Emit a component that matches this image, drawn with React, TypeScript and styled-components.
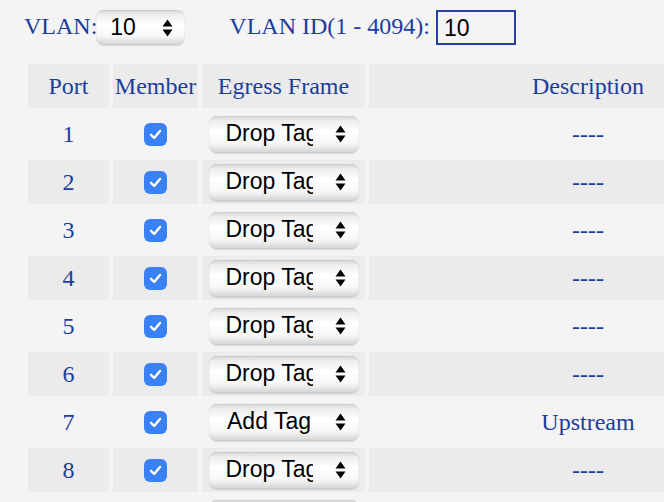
import React from "react";
import styled, { createGlobalStyle } from "styled-components";

const Global = createGlobalStyle`
  html, body {
    margin: 0;
    padding: 0;
    background: #f4f4f4;
    overflow: hidden;
  }
  body {
    font-family: "Liberation Serif", "Times New Roman", serif;
    color: #1c3d9d;
  }
`;

const Page = styled.div`
  padding: 10px 0 0 24px;
  width: 900px;
`;

const Toolbar = styled.div`
  display: flex;
  align-items: center;
  height: 35px;
  font-size: 24px;
`;

const Label = styled.span<{ $gap?: number }>`
  margin-left: ${(p) => p.$gap ?? 0}px;
  margin-right: -1px;
  line-height: 1;
  padding-bottom: 3px;
`;

const SelectBox = styled.div<{ $w: number; $h: number; $pl: number }>`
  position: relative;
  box-sizing: border-box;
  display: flex;
  align-items: center;
  width: ${(p) => p.$w}px;
  height: ${(p) => p.$h}px;
  padding-left: ${(p) => p.$pl}px;
  border-radius: 8px;
  background: linear-gradient(
    180deg,
    #d3d3d3 0%,
    #eeeeee 13%,
    #ffffff 42%,
    #f7f7f7 75%,
    #d2d2d2 100%
  );
  box-shadow: inset 0 0 0 0.5px rgba(0, 0, 0, 0.07), 0 0.5px 1px rgba(0, 0, 0, 0.12);
  font-family: "Liberation Sans", Arial, sans-serif;
  font-size: 23px;
  color: #000;
`;

const SelectValue = styled.span<{ $w: number }>`
  display: block;
  width: ${(p) => p.$w}px;
  overflow: hidden;
  white-space: nowrap;
  line-height: 1;
  padding-bottom: 1px;
`;

const Arrows = styled.svg`
  position: absolute;
  top: 50%;
  margin-top: -9px;
  pointer-events: none;
`;

const IdInput = styled.input`
  box-sizing: border-box;
  width: 80px;
  height: 35px;
  margin-left: 7px;
  border: 2px solid #2a3fa3;
  background: #f4f4f4;
  padding: 2px 0 0 6px;
  font-family: "Liberation Sans", Arial, sans-serif;
  font-size: 23px;
  color: #000;
  outline: none;
  border-radius: 0;
`;

const Table = styled.table`
  margin-top: 15px;
  border-collapse: separate;
  border-spacing: 4px;
  table-layout: fixed;
  width: 787px;
  font-size: 24px;
`;

const Th = styled.th`
  height: 44px;
  padding: 0;
  background: #ebebeb;
  font-weight: normal;
  text-align: center;
  vertical-align: middle;
  color: #1c3d9d;
`;

const Td = styled.td<{ $shade: boolean }>`
  height: 44px;
  padding: 0;
  background: ${(p) => (p.$shade ? "#ebebeb" : "transparent")};
  text-align: center;
  vertical-align: middle;
  color: #1c3d9d;
`;

const Check = styled.span`
  display: inline-flex;
  align-items: center;
  justify-content: center;
  width: 23px;
  height: 23px;
  margin-right: 1px;
  border-radius: 6px;
  background: #3b81f6;
`;

const CellInner = styled.div`
  display: flex;
  align-items: center;
  justify-content: center;
  height: 44px;
`;

function ArrowIcon({ right }: { right: number }) {
  return (
    <Arrows width="11" height="18" viewBox="0 0 11 18" style={{ right }}>
      <path d="M5.5 0.5 L10.5 7.5 L0.5 7.5 Z" fill="#000" />
      <path d="M5.5 17.5 L10.5 10.5 L0.5 10.5 Z" fill="#000" />
    </Arrows>
  );
}

function FakeSelect({
  w,
  h,
  pl,
  textW,
  arrowRight,
  value,
}: {
  w: number;
  h: number;
  pl: number;
  textW: number;
  arrowRight: number;
  value: string;
}) {
  return (
    <SelectBox $w={w} $h={h} $pl={pl} role="combobox">
      <SelectValue $w={textW}>{value}</SelectValue>
      <ArrowIcon right={arrowRight} />
    </SelectBox>
  );
}

const rows = [
  { port: 1, frame: "Drop Tag", desc: "----" },
  { port: 2, frame: "Drop Tag", desc: "----" },
  { port: 3, frame: "Drop Tag", desc: "----" },
  { port: 4, frame: "Drop Tag", desc: "----" },
  { port: 5, frame: "Drop Tag", desc: "----" },
  { port: 6, frame: "Drop Tag", desc: "----" },
  { port: 7, frame: "Add Tag", desc: "Upstream" },
  { port: 8, frame: "Drop Tag", desc: "----" },
  { port: 9, frame: "Drop Tag", desc: "----" },
  { port: 10, frame: "Drop Tag", desc: "----" },
];

export default function App() {
  return (
    <>
      <Global />
      <Page>
        <Toolbar>
          <Label>VLAN:</Label>
          <FakeSelect w={89} h={35} pl={14} textW={40} arrowRight={12} value="10" />
          <Label $gap={44}>VLAN ID(1 - 4094):</Label>
          <IdInput defaultValue="10" />
        </Toolbar>
        <Table>
          <colgroup>
            <col style={{ width: 81 }} />
            <col style={{ width: 85 }} />
            <col style={{ width: 163 }} />
            <col style={{ width: 438 }} />
          </colgroup>
          <thead>
            <tr>
              <Th>Port</Th>
              <Th>Member</Th>
              <Th>Egress Frame</Th>
              <Th>Description</Th>
            </tr>
          </thead>
          <tbody>
            {rows.map((r, i) => {
              const shade = i % 2 === 1;
              return (
                <tr key={r.port}>
                  <Td $shade={shade}>{r.port}</Td>
                  <Td $shade={shade}>
                    <CellInner>
                      <Check>
                        <svg width="15" height="15" viewBox="0 0 15 15">
                          <path
                            d="M3 7.8 L6.2 11 L12 4"
                            stroke="#fff"
                            strokeWidth="2.4"
                            fill="none"
                            strokeLinecap="round"
                            strokeLinejoin="round"
                          />
                        </svg>
                      </Check>
                    </CellInner>
                  </Td>
                  <Td $shade={shade}>
                    <CellInner>
                      <FakeSelect
                        w={150}
                        h={37}
                        pl={17}
                        textW={87}
                        arrowRight={13}
                        value={r.frame}
                      />
                    </CellInner>
                  </Td>
                  <Td $shade={shade}>{r.desc}</Td>
                </tr>
              );
            })}
          </tbody>
        </Table>
      </Page>
    </>
  );
}
